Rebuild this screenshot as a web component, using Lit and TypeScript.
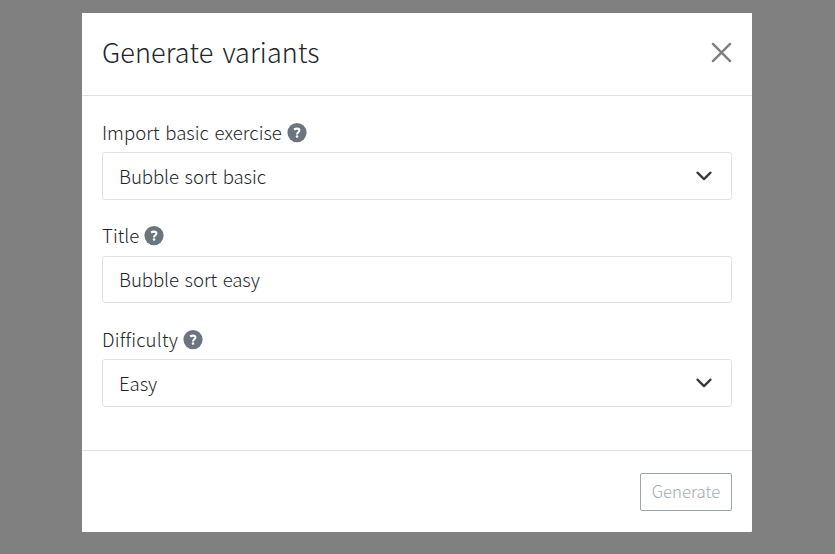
import { LitElement, html, css } from "lit";
import { customElement, property } from "lit/decorators.js";

const textStack = css`"Noto Sans CJK JP", "Noto Sans", sans-serif`;

@customElement("help-icon")
export class HelpIcon extends LitElement {
  static styles = css`
    :host { display: block; width: 20px; height: 20px; }
    .badge { display: block; width: 20px; height: 20px; }
    .disc { fill: #6c757d; }
    .hook { fill: none; stroke: #fff; stroke-width: 2.1; }
    .dot { fill: #fff; }
  `;
  render() {
    return html`<svg class="badge" viewBox="0 0 20 20" role="img" aria-label="Help"><circle class="disc" cx="10" cy="9.6" r="9.6"/><path class="hook" d="M7.1 6.5C8.1 5.9 9 5.6 10 5.6c1.5 0 2.4.7 2.4 1.8 0 1.9-2.4 1.8-2.4 4"/><circle class="dot" cx="10" cy="13.4" r="1.25"/></svg>`;
  }
}

@customElement("form-field")
export class FormField extends LitElement {
  @property() label = "";
  @property() value = "";
  @property({ type: Boolean }) select = false;
  static styles = css`
    :host { display: block; }
    .label { display: flex; align-items: center; gap: 5px; height: 20px; margin-bottom: 9.25px; }
    .text, .value { display: block; white-space: nowrap; }
    .text { line-height: 20px; padding-bottom: 2px; }
    .value { letter-spacing: -0.06px; }
    .box { box-sizing: border-box; height: 47.5px; border: 1px solid #dee2e6; border-radius: 3px; padding: 0 18px 0 16px; display: flex; align-items: center; justify-content: space-between; }
    .chevron { width: 18px; height: 18px; fill: none; stroke: #343a40; stroke-width: 2; stroke-linecap: round; stroke-linejoin: round; }
  `;
  render() {
    return html`
      <div class="label"><span class="text">${this.label}</span><help-icon></help-icon></div>
      <div class="box"><span class="value">${this.value}</span>
        ${this.select ? html`<svg class="chevron" viewBox="0 0 16 16"><path d="m2.2 5 5.8 5.8 5.8-5.8"/></svg>` : null}
      </div>`;
  }
}

@customElement("app-root")
export class AppRoot extends LitElement {
  static styles = css`
    :host { display: block; box-sizing: border-box; height: 554px; padding: 13px 83px 22px 82px; background: #808080; color: #212529; font: 300 18.6px/24px ${textStack}; word-spacing: 1.6px; letter-spacing: 0.02px; }
    .dialog { height: 519px; background: #fff; border-bottom-right-radius: 1px; display: flex; flex-direction: column; }
    .header { box-sizing: border-box; height: 83px; padding: 0 20px 3.5px; border-bottom: 1px solid #dee2e6; display: flex; align-items: center; justify-content: space-between; }
    .title { margin: 0; font-size: 27px; font-weight: 300; letter-spacing: 0.12px; word-spacing: 3px; }
    .close { width: 21px; height: 21px; fill: none; stroke: #7f7f7f; stroke-width: 2.5; stroke-linecap: round; }
    .body { flex: 1; padding: 26.9px 20px 0; display: flex; flex-direction: column; gap: 26.75px; }
    .long { letter-spacing: 0.2px; }
    .footer { box-sizing: border-box; height: 82px; border-top: 1px solid #dee2e6; padding: 22px 20px; display: flex; justify-content: flex-end; }
    .generate { box-sizing: border-box; width: 92px; height: 38px; padding: 0 0 2px; border: 1px solid #9da3aa; border-radius: 2px; background: #fff; color: #a6abb0; font: 300 16.8px/24px ${textStack}; }
  `;
  render() {
    return html`<section class="dialog">
      <header class="header"><h1 class="title">Generate variants</h1>
        <svg class="close" viewBox="0 0 22 22"><path d="m2 2 18 18M20 2 2 20"/></svg></header>
      <main class="body">
        <form-field label="Import basic exercise" value="Bubble sort basic" select></form-field>
        <form-field label="Title" value="Bubble sort easy"></form-field>
        <form-field class="long" label="Difficulty" value="Easy" select></form-field>
      </main>
      <footer class="footer"><button class="generate" disabled>Generate</button></footer>
    </section>`;
  }
}
